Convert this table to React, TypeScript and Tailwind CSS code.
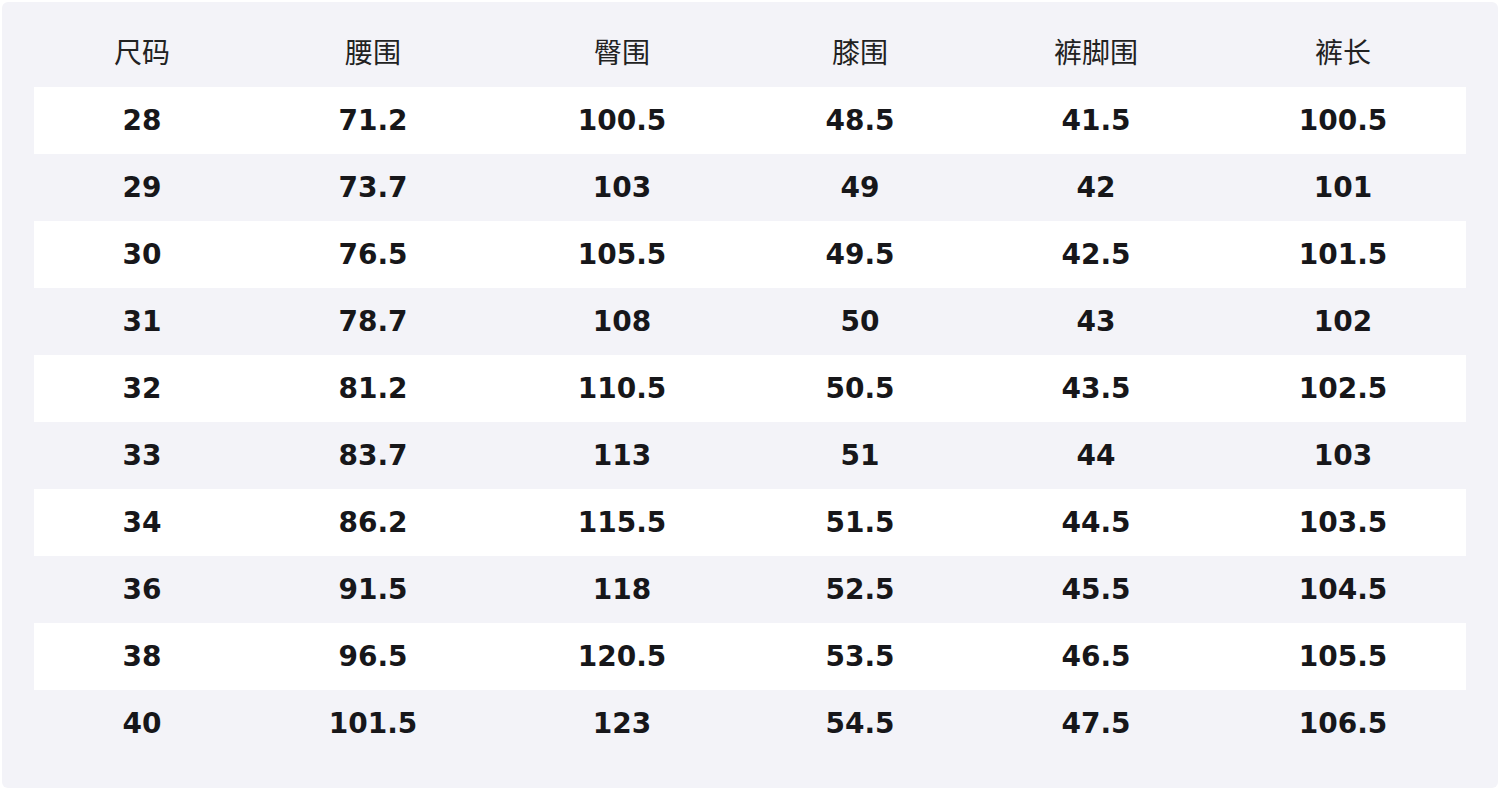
const headers = ["尺码", "腰围", "臀围", "膝围", "裤脚围", "裤长"];

const rows: string[][] = [
  ["28", "71.2", "100.5", "48.5", "41.5", "100.5"],
  ["29", "73.7", "103", "49", "42", "101"],
  ["30", "76.5", "105.5", "49.5", "42.5", "101.5"],
  ["31", "78.7", "108", "50", "43", "102"],
  ["32", "81.2", "110.5", "50.5", "43.5", "102.5"],
  ["33", "83.7", "113", "51", "44", "103"],
  ["34", "86.2", "115.5", "51.5", "44.5", "103.5"],
  ["36", "91.5", "118", "52.5", "45.5", "104.5"],
  ["38", "96.5", "120.5", "53.5", "46.5", "105.5"],
  ["40", "101.5", "123", "54.5", "47.5", "106.5"],
];

const cols = "grid grid-cols-[216px_246px_252px_224px_248px_246px]";

export default function App() {
  return (
    <div className="w-[1500px] h-[791px] bg-white p-[2px]">
      <div className="h-[786px] rounded-md bg-[#f3f3f8] px-[32px] pt-[17px] font-['DejaVu_Sans','Noto_Sans_CJK_SC',sans-serif] text-[#17171a]">
        {/* Header */}
        <div className={`${cols} h-[68px] items-center pb-[4px]`}>
          {headers.map((h) => (
            <div key={h} className="text-center text-[28px] font-normal text-[#222] font-['Noto_Sans_CJK_SC',sans-serif]">
              {h}
            </div>
          ))}
        </div>

        {/* Body */}
        {rows.map((r, i) => (
          <div
            key={r[0]}
            className={`${cols} h-[67px] items-center ${i % 2 === 0 ? "bg-white" : ""}`}
          >
            {r.map((v, j) => (
              <div key={j} className="text-center text-[28px] font-bold leading-none">
                {v}
              </div>
            ))}
          </div>
        ))}
      </div>
    </div>
  );
}
